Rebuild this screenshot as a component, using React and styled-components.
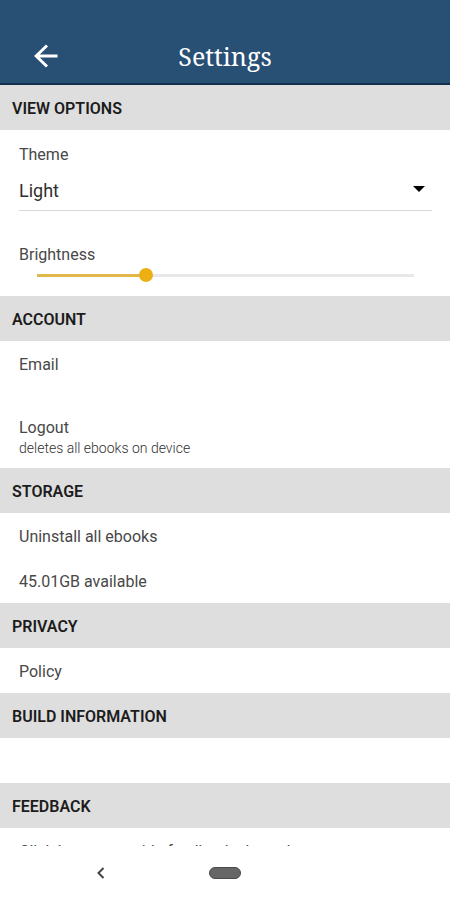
import { useState } from 'react';
import styled, { createGlobalStyle } from 'styled-components';

const App = () => {
  const [theme, setTheme] = useState('light');
  const [brightness, setBrightness] = useState(28);

  return (
    <>
      <GlobalStyle />
      <Screen>
        <Header>
          <BackButton type="button" aria-label="Back">
            <svg width="24" height="24" viewBox="0 0 24 24" fill="none" stroke="currentColor" strokeWidth="3">
              <path d="M23.5 12H2M13 1.5L2.2 12L13 22.5" />
            </svg>
          </BackButton>
          <Title>Settings</Title>
        </Header>

        <Content>
          <SectionTitle>VIEW OPTIONS</SectionTitle>
          <Field>
            <Label htmlFor="theme">Theme</Label>
            <SelectWrap>
              <Select id="theme" value={theme} onChange={(e) => setTheme(e.target.value)}>
                <option value="light">Light</option>
                <option value="dark">Dark</option>
              </Select>
              <Caret width="12" height="6" viewBox="0 0 12 6">
                <path d="M0 0H12L6 6Z" fill="#000000" />
              </Caret>
            </SelectWrap>
          </Field>
          <SliderField>
            <Label htmlFor="brightness">Brightness</Label>
            <Slider
              id="brightness"
              type="range"
              min="0"
              max="100"
              value={brightness}
              onChange={(e) => setBrightness(Number(e.target.value))}
              style={{ '--fill': `${brightness}%` }}
            />
          </SliderField>

          <SectionTitle>ACCOUNT</SectionTitle>
          <Row>Email</Row>
          <ActionRow type="button" $tall>
            Logout
            <Hint>deletes all ebooks on device</Hint>
          </ActionRow>

          <SectionTitle>STORAGE</SectionTitle>
          <ActionRow type="button">Uninstall all ebooks</ActionRow>
          <Row>45.01GB available</Row>

          <SectionTitle>PRIVACY</SectionTitle>
          <LinkRow href="#policy">Policy</LinkRow>

          <SectionTitle>BUILD INFORMATION</SectionTitle>
          <Row />

          <SectionTitle>FEEDBACK</SectionTitle>
          <LinkRow href="#feedback">Click here to provide feedback about the app</LinkRow>
        </Content>

        <SystemBar>
          <NavButton type="button" aria-label="System back">
            <svg width="8" height="12" viewBox="0 0 8 12" fill="none" stroke="#444444" strokeWidth="2">
              <path d="M6.5 1L1.5 6L6.5 11" />
            </svg>
          </NavButton>
          <HomeButton type="button" aria-label="Home">
            <HomePill />
          </HomeButton>
        </SystemBar>
      </Screen>
    </>
  );
};

export default App;

const GlobalStyle = createGlobalStyle`
  * {
    box-sizing: border-box;
  }

  body {
    margin: 0;
    background: #ffffff;
    color: #484848;
    font-family: Roboto, "Liberation Sans", sans-serif;
    font-size: 16px;
  }
`;

const Screen = styled.div`
  display: flex;
  flex-direction: column;
  height: 100vh;
`;

const Header = styled.header`
  display: grid;
  grid-template-columns: 56px 1fr 56px;
  align-items: center;
  flex-shrink: 0;
  padding: 32px 18px 4px;
  background: #284f74;
  border-bottom: 2px solid #14304f;
  color: #ffffff;
`;

const BackButton = styled.button`
  display: flex;
  align-items: center;
  justify-content: center;
  height: 47px;
  padding: 0;
  background: none;
  border: none;
  color: inherit;
  cursor: pointer;
`;

const Title = styled.h1`
  margin: 0;
  font-family: "Noto Serif", "Droid Serif", "Liberation Serif", serif;
  font-size: 25px;
  font-weight: 400;
  line-height: 32px;
  text-align: center;
`;

const Content = styled.main`
  flex: 1;
  min-height: 0;
  overflow-y: auto;
  scrollbar-width: none;
`;

const SectionTitle = styled.h2`
  height: 45px;
  margin: 0;
  padding: 0 12px;
  background: #dedede;
  color: #1c1c1c;
  font-size: 16px;
  font-weight: 600;
  line-height: 48px;
`;

const Field = styled.div`
  padding: 14px 18px 0 19px;
`;

const SliderField = styled.div`
  padding: 33px 18px 14px 19px;
`;

const Label = styled.label`
  display: block;
  line-height: 22px;
`;

const SelectWrap = styled.div`
  display: grid;
  align-items: center;
  border-bottom: 1px solid #d8d8d8;
`;

const Select = styled.select`
  grid-area: 1 / 1;
  width: 100%;
  height: 44px;
  padding: 4px 0 0;
  appearance: none;
  background: none;
  border: none;
  border-radius: 0;
  color: #303030;
  font-family: inherit;
  font-size: 18px;
`;

const Caret = styled.svg`
  grid-area: 1 / 1;
  justify-self: end;
  margin: 2px 7px 0 0;
  pointer-events: none;
`;

const Slider = styled.input`
  display: block;
  width: calc(100% - 36px);
  height: 14px;
  margin: 2px 18px 0;
  appearance: none;
  background: linear-gradient(#dfb849, #dfb849) left center / var(--fill) 3px no-repeat,
    linear-gradient(#e8e8e8, #e8e8e8) center / 100% 3px no-repeat;
  cursor: pointer;

  &::-webkit-slider-thumb {
    appearance: none;
    width: 14px;
    height: 14px;
    border-radius: 50%;
    background: #ecb015;
  }
`;

const Row = styled.div`
  height: 45px;
  padding: 0 19px;
  line-height: 48px;
`;

const ActionRow = styled.button`
  display: block;
  width: 100%;
  height: ${({ $tall }) => ($tall ? '82px' : '45px')};
  padding: ${({ $tall }) => ($tall ? '31px 19px 11px' : '0 19px')};
  background: none;
  border: none;
  color: inherit;
  font: inherit;
  line-height: ${({ $tall }) => ($tall ? '22px' : '48px')};
  text-align: left;
  cursor: pointer;
`;

const Hint = styled.span`
  display: block;
  color: #303030;
  font-size: 14px;
  font-weight: 300;
  line-height: 18px;
`;

const LinkRow = styled.a`
  display: block;
  height: 45px;
  padding: 0 19px;
  color: inherit;
  line-height: 48px;
  text-decoration: none;
`;

const SystemBar = styled.nav`
  display: grid;
  grid-template-columns: 1fr auto 1fr;
  align-items: center;
  flex-shrink: 0;
  height: 54px;
  background: #ffffff;
`;

const NavButton = styled.button`
  display: flex;
  justify-self: center;
  padding: 12px 16px 12px 8px;
  background: none;
  border: none;
  cursor: pointer;
`;

const HomeButton = styled.button`
  padding: 12px 0;
  background: none;
  border: none;
  cursor: pointer;
`;

const HomePill = styled.span`
  display: block;
  width: 32px;
  height: 12px;
  border: 1px solid #4a4a4a;
  border-radius: 6px;
  background: #666666;
`;
